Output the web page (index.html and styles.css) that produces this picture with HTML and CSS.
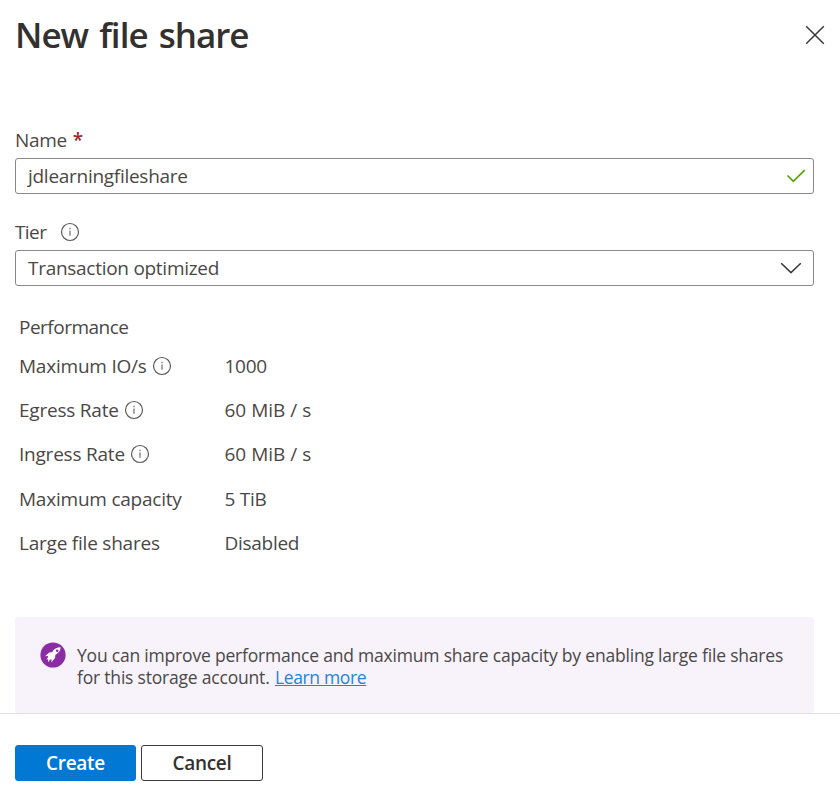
FILE: index.html
```html
<!DOCTYPE html>
<html lang="en">
	<head>
		<meta charset="utf-8">
		<title>New file share</title>
		<link rel="stylesheet" href="styles.css">
	</head>
	<body>
		<svg width="0" height="0" class="defs">
			<symbol id="info" viewBox="0 0 20 20">
				<circle cx="10" cy="10" r="8.5" fill="none" stroke="#5c5a58" stroke-width="1.2"/>
				<path d="M10 8.400v5.400M10 5.800v1.500" fill="none" stroke="#777" stroke-width="1.300"/>
			</symbol>
		</svg>

		<div class="panel">
			<div class="header">
				<h1>New file share</h1>
				<svg class="close" viewBox="0 0 20 20"><path d="M1.200 1.200l17.600 17.600M18.800 1.200L1.200 18.800"/></svg>
			</div>

			<div class="content">
				<div class="label">Name <span class="required">*</span></div>
				<div class="field">
					<span>jdlearningfileshare</span>
					<svg class="check" viewBox="0 0 20 14"><path d="M1.500 6.500l5.800 5.800L18.700 1.200"/></svg>
				</div>

				<div class="label tier"><span>Tier</span><svg class="info"><use href="#info"/></svg></div>
				<div class="field">
					<span>Transaction optimized</span>
					<svg class="chevron" viewBox="0 0 22 12"><path d="M1.200 1.200L11 10.600l9.800-9.400"/></svg>
				</div>

				<div class="perf">
					<div class="row title">Performance</div>
					<div class="row"><div class="key">Maximum IO/s<svg class="info"><use href="#info"/></svg></div><span>1000</span></div>
					<div class="row"><div class="key">Egress Rate<svg class="info"><use href="#info"/></svg></div><span class="rate">60 MiB / s</span></div>
					<div class="row"><div class="key">Ingress Rate<svg class="info"><use href="#info"/></svg></div><span class="rate">60 MiB / s</span></div>
					<div class="row"><div class="key">Maximum capacity</div><span>5 TiB</span></div>
					<div class="row"><div class="key">Large file shares</div><span>Disabled</span></div>
				</div>

				<div class="upsell">
					<svg class="rocket" viewBox="0 0 26 26">
						<circle cx="13" cy="13" r="12.600" fill="#8a2da5"/>
						<path fill="#fff" d="M20.600 5.200c-3.300-.1-5.700 1-7.700 3.700l-.9 1.300-2.900.2-4.100 3.900 3.100-.4-.3 1.900-1.500 1.900 1.900-.8-.2 3.400 2.200-2.700 1.500-.4-.6 3.200 4-4.400.2-3 1.300-1c2.700-2 4-3.900 4-6.800z"/>
						<circle cx="17.200" cy="8.700" r="1.300" fill="#8a2da5"/>
					</svg>
					<p>
						You can improve performance and maximum share capacity by enabling large file shares<br>
						for this storage account. <a href="#">Learn more</a>
					</p>
				</div>
			</div>

			<div class="footer">
				<button class="primary">Create</button>
				<button>Cancel</button>
			</div>
		</div>
	</body>
</html>
```
FILE: styles.css
```css
* {
	box-sizing:border-box;
}
body {
	margin:0;
	background:#fff;
	color:#4a4846;
	font-family:"Open Sans", "Noto Sans", sans-serif;
	font-size:19px;
	line-height:26px;
	letter-spacing:-0.28px;
	white-space:nowrap;
}
svg {
	flex-shrink:0;
}
.defs {
	position:absolute;
}
.panel {
	height:805px;
	display:flex;
	flex-direction:column;
	overflow:hidden;
}
.header {
	height:127px;
	padding:10px 15px 0;
	display:flex;
	justify-content:space-between;
	align-items:flex-start;
}
h1 {
	margin:0;
	font-size:35px;
	line-height:50px;
	font-weight:600;
	letter-spacing:-1px;
	word-spacing:3px;
	color:#323130;
}
.close {
	width:20px;
	height:20px;
	margin-top:15px;
}
.close path, .chevron path {
	fill:none;
	stroke:#3b3a39;
	stroke-width:1.5;
}
.content {
	padding:0 26px 0 15px;
}
.label {
	height:31px;
}
.required {
	margin-left:1px;
	color:#a4262c;
	font-weight:600;
}
.tier {
	margin-top:25px;
	display:flex;
	gap:14px;
	letter-spacing:-0.6px;
}
.field {
	height:36px;
	border:1px solid #8a8886;
	border-radius:3px;
	padding:0 7px 0 12px;
	display:flex;
	justify-content:space-between;
	align-items:center;
}
.check {
	width:20px;
	height:14px;
}
.check path {
	fill:none;
	stroke:#57a300;
	stroke-width:1.7;
}
.chevron {
	width:22px;
	height:12px;
	margin-right:4px;
}
.info {
	width:20px;
	height:20px;
	margin-top:3px;
}
.perf {
	padding:28px 0 0 4px;
}
.row {
	display:flex;
	height:44.2px;
}
.row.title {
	height:39px;
	letter-spacing:-0.5px;
}
.key {
	width:205.5px;
	display:flex;
	gap:5px;
	letter-spacing:-0.22px;
}
.rate {
	letter-spacing:0;
}
.upsell {
	height:96px;
	margin-top:43px;
	padding:27px 0 0 24.5px;
	background:#f8f3fb;
	border-radius:3px;
	display:flex;
	gap:11.5px;
	font-size:17.5px;
	line-height:22px;
	letter-spacing:-0.2px;
}
.upsell p {
	margin:0;
}
.upsell a {
	margin-left:1px;
	color:#2483db;
	letter-spacing:-0.35px;
}
.rocket {
	width:26px;
	height:26px;
	margin-top:-2px;
}
.footer {
	flex:1;
	border-top:1px solid #e1dfdd;
	padding:31px 15px 0;
	display:flex;
	gap:5px;
}
button {
	width:122px;
	height:36px;
	padding:0;
	background:#fff;
	border:1px solid #3b3a39;
	border-radius:3px;
	color:#323130;
	font-family:inherit;
	font-size:19px;
	font-weight:600;
	letter-spacing:-0.3px;
}
button.primary {
	width:121px;
	background:#0078d4;
	border-color:#0078d4;
	color:#fff;
}
```
